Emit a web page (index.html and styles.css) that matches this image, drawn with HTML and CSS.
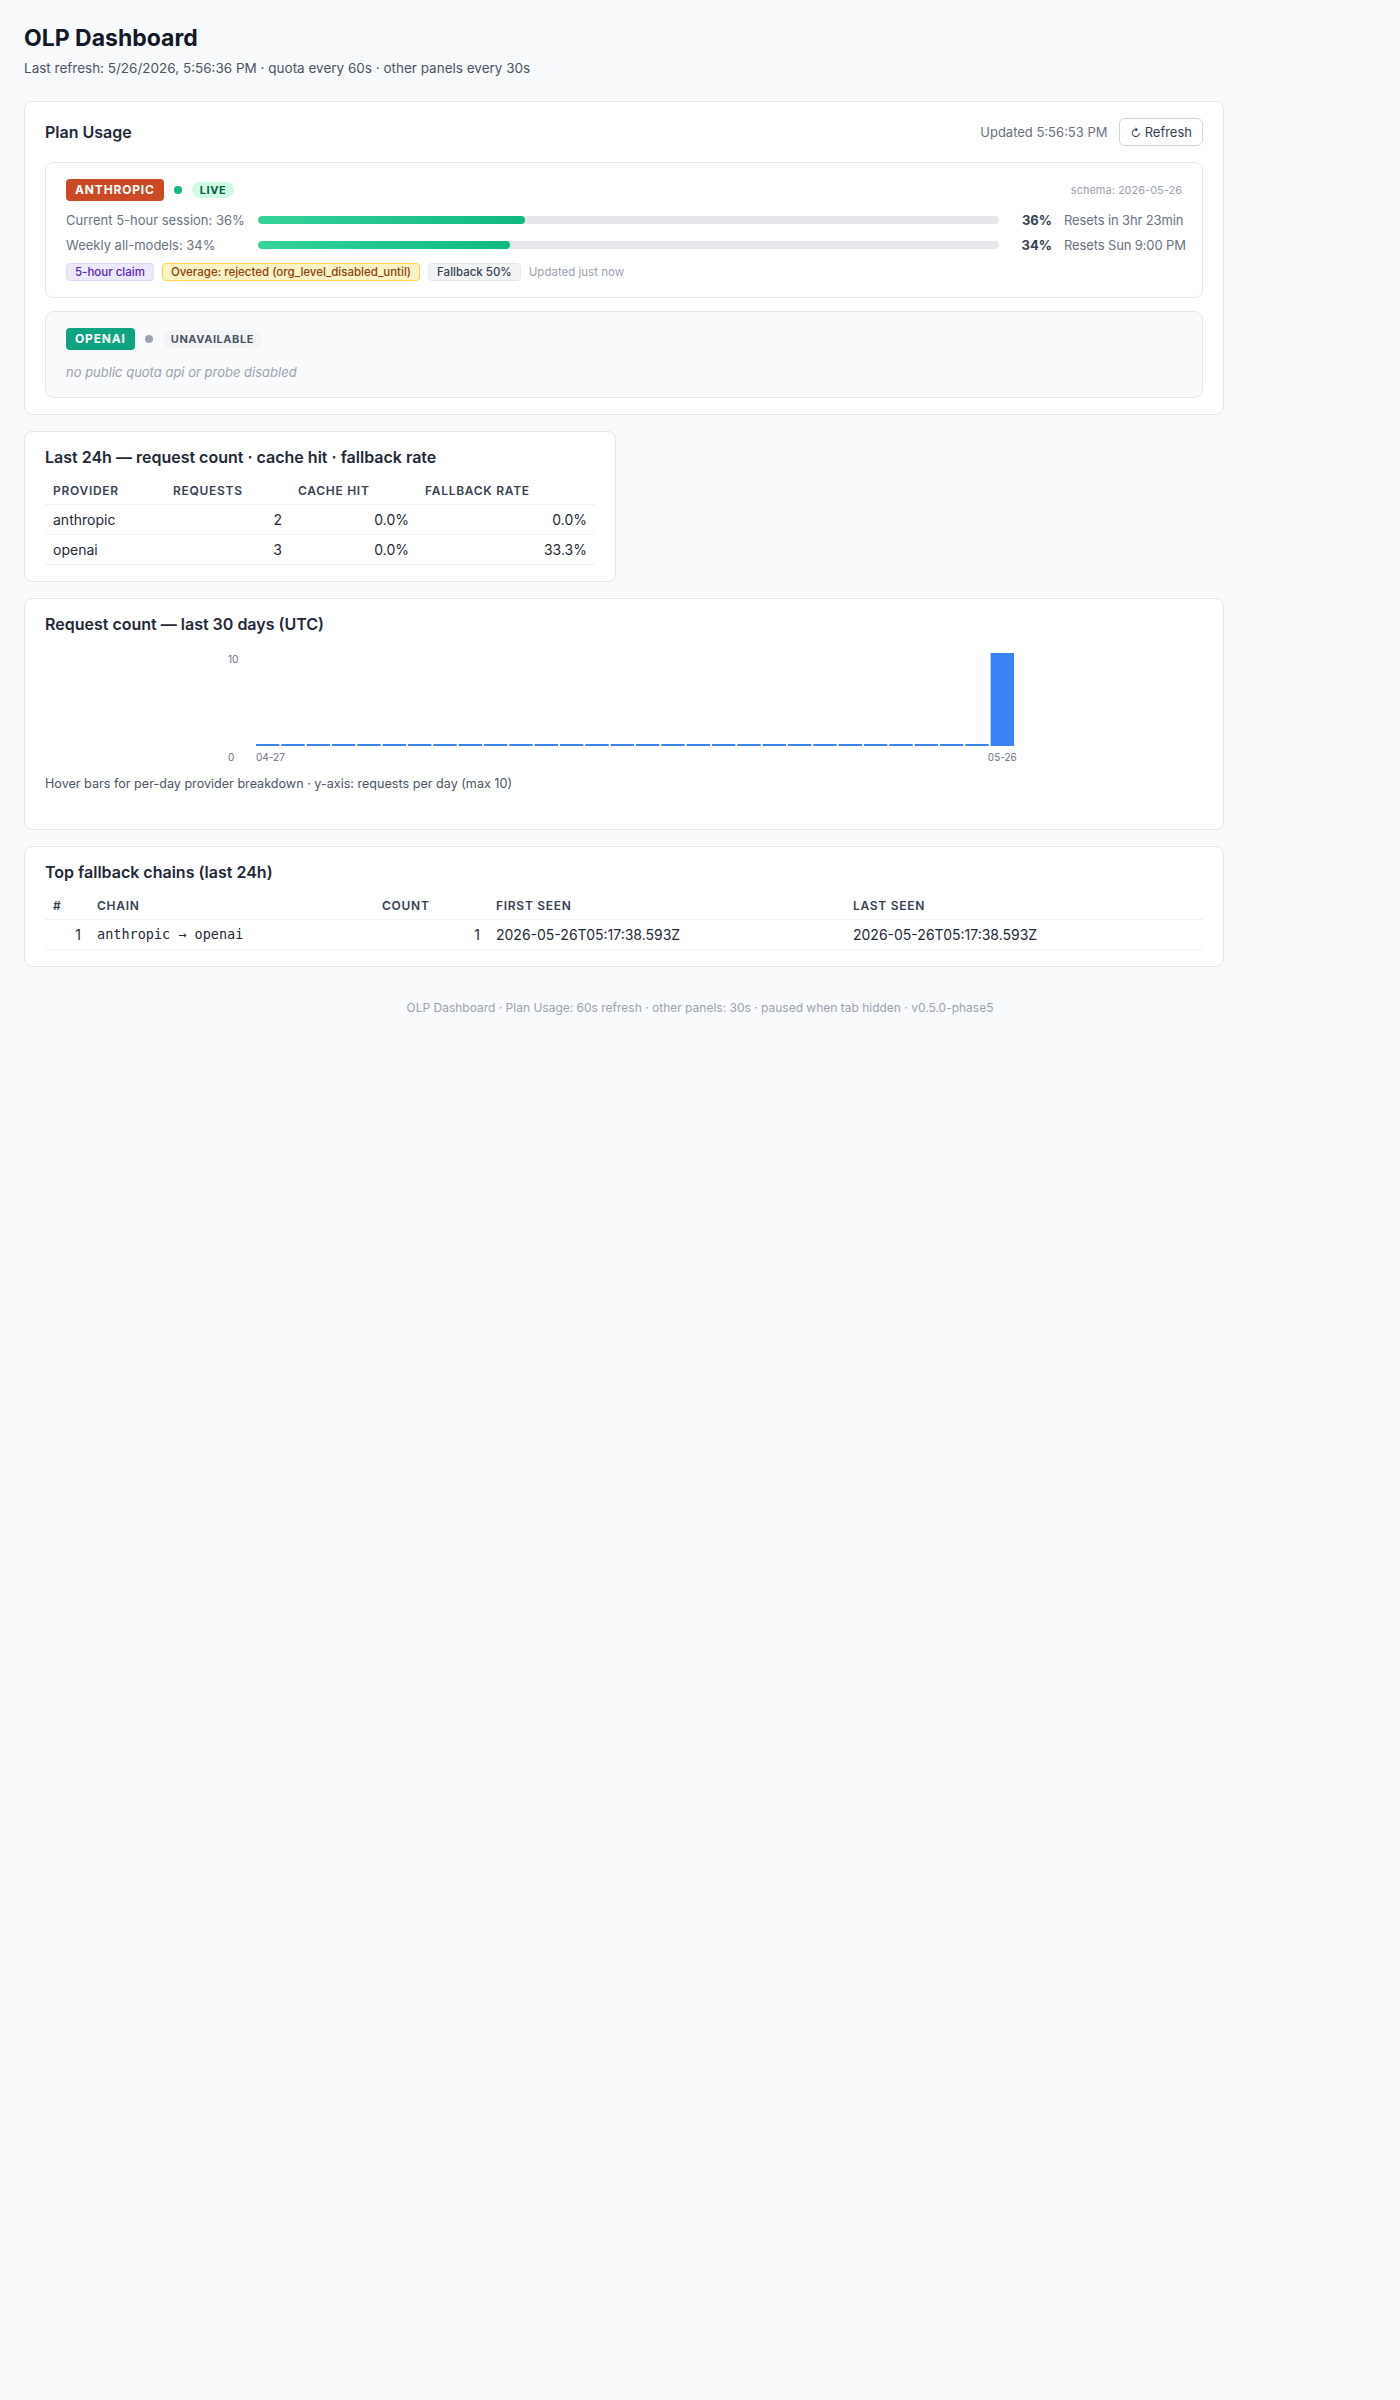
FILE: index.html
```html
<!DOCTYPE html>
<html>
<head>
    <title>OLP Dashboard</title>
    <link rel="stylesheet" href="styles.css">
</head>
<body>
    <header class="page-head">
        <h1>OLP Dashboard</h1>
        <p class="sub">Last refresh: 5/26/2026, 5:56:36 PM · quota every 60s · other panels every 30s</p>
    </header>

    <main class="grid">
        <section class="card wide">
            <div class="card-head">
                <h2>Plan Usage</h2>
                <div class="head-right">
                    <span class="muted">Updated 5:56:53 PM</span>
                    <button type="button" class="btn"><span class="btn-ico">↻</span> Refresh</button>
                </div>
            </div>

            <div class="provider">
                <div class="prov-head">
                    <span class="badge anthropic">ANTHROPIC</span>
                    <span class="dot green"></span>
                    <span class="pill live">LIVE</span>
                    <span class="schema">schema: 2026-05-26</span>
                </div>
                <div class="meters">
                    <div class="meter">
                        <span class="m-label">Current 5-hour session: 36%</span>
                        <div class="track"><div class="fill" style="width:36%"></div></div>
                        <span class="m-pct">36%</span>
                        <span class="m-reset">Resets in 3hr 23min</span>
                    </div>
                    <div class="meter">
                        <span class="m-label">Weekly all-models: 34%</span>
                        <div class="track"><div class="fill" style="width:34%"></div></div>
                        <span class="m-pct">34%</span>
                        <span class="m-reset">Resets Sun 9:00 PM</span>
                    </div>
                </div>
                <div class="tags">
                    <span class="tag purple">5-hour claim</span>
                    <span class="tag amber">Overage: rejected (org_level_disabled_until)</span>
                    <span class="tag gray">Fallback 50%</span>
                    <span class="tag-note">Updated just now</span>
                </div>
            </div>

            <div class="provider off">
                <div class="prov-head">
                    <span class="badge openai">OPENAI</span>
                    <span class="dot gray"></span>
                    <span class="pill unavail">UNAVAILABLE</span>
                </div>
                <p class="off-note">no public quota api or probe disabled</p>
            </div>
        </section>

        <section class="card">
            <h2>Last 24h — request count · cache hit · fallback rate</h2>
            <table class="tbl stats">
                <thead>
                    <tr>
                        <th class="c-prov">Provider</th>
                        <th class="c-req">Requests</th>
                        <th class="c-cache">Cache hit</th>
                        <th>Fallback rate</th>
                    </tr>
                </thead>
                <tbody>
                    <tr><td>anthropic</td><td class="num">2</td><td class="num">0.0%</td><td class="num">0.0%</td></tr>
                    <tr><td>openai</td><td class="num">3</td><td class="num">0.0%</td><td class="num">33.3%</td></tr>
                </tbody>
            </table>
        </section>

        <section class="card wide">
            <h2>Request count — last 30 days (UTC)</h2>
            <svg id="chart" class="chart" width="800" height="120" viewBox="0 0 800 120"></svg>
            <p class="chart-note">Hover bars for per-day provider breakdown · y-axis: requests per day (max 10)</p>
        </section>

        <section class="card wide">
            <h2>Top fallback chains (last 24h)</h2>
            <table class="tbl chains">
                <thead>
                    <tr>
                        <th class="c-rank">#</th>
                        <th class="c-chain">Chain</th>
                        <th class="c-count">Count</th>
                        <th class="c-seen">First seen</th>
                        <th>Last seen</th>
                    </tr>
                </thead>
                <tbody>
                    <tr>
                        <td class="num">1</td>
                        <td class="mono">anthropic → openai</td>
                        <td class="num">1</td>
                        <td>2026-05-26T05:17:38.593Z</td>
                        <td>2026-05-26T05:17:38.593Z</td>
                    </tr>
                </tbody>
            </table>
        </section>
    </main>

    <footer class="foot">OLP Dashboard · Plan Usage: 60s refresh · other panels: 30s · paused when tab hidden · v0.5.0-phase5</footer>

    <script>
        // 30 days, only today has traffic
        const counts = [];
        for (let i = 0; i < 30; i++) counts.push(0);
        counts[29] = 10;

        const svg = document.getElementById('chart');
        const ns = 'http://www.w3.org/2000/svg';
        const plotLeft = 32, plotTop = 7, plotBottom = 100, pitch = 760 / 30;
        const maxCount = 10;

        function label(x, y, text, anchor) {
            const t = document.createElementNS(ns, 'text');
            t.setAttribute('x', x);
            t.setAttribute('y', y);
            t.setAttribute('text-anchor', anchor);
            t.setAttribute('class', 'axis');
            t.textContent = text;
            svg.appendChild(t);
        }

        label(4, 17, '10', 'start');
        label(4, 115, '0', 'start');

        counts.forEach((c, i) => {
            let h = (c / maxCount) * (plotBottom - plotTop);
            if (h < 2) h = 2;
            const r = document.createElementNS(ns, 'rect');
            r.setAttribute('x', plotLeft + i * pitch);
            r.setAttribute('y', plotBottom - h);
            r.setAttribute('width', pitch - 2);
            r.setAttribute('height', h);
            r.setAttribute('class', 'bar');
            svg.appendChild(r);
        });

        label(plotLeft, 115, '04-27', 'start');
        label(plotLeft + 29 * pitch + (pitch - 2) / 2, 115, '05-26', 'middle');
    </script>
</body>
</html>
```

FILE: styles.css
```css
body {
    margin: 0;
    padding: 24px;
    background-color: #f9fafb;
    font-family: Inter, "Liberation Sans", sans-serif;
    color: #1f2937;
}
h1 {
    margin: 0;
    font-size: 23px;
    line-height: 29px;
    font-weight: 700;
    color: #111827;
}
h2 {
    margin: 0;
    font-size: 16px;
    line-height: 19px;
    font-weight: 600;
    color: #1f2937;
}
.sub {
    margin: 6px 0 0;
    font-size: 13.5px;
    line-height: 18px;
    color: #4b5563;
}
.page-head {
    margin-bottom: 24px;
}
.grid {
    max-width: 1200px;
    display: grid;
    grid-template-columns: 1fr 1fr;
    gap: 16px;
    align-items: start;
}
.card {
    background: #fff;
    border: 1px solid #e5e7eb;
    border-radius: 8px;
    padding: 16px 20px;
}
.card.wide {
    grid-column: span 2;
}
.card-head {
    display: flex;
    align-items: center;
    justify-content: space-between;
    margin-bottom: 16px;
}
.head-right {
    display: flex;
    align-items: center;
    gap: 12px;
}
.muted {
    font-size: 13px;
    color: #6b7280;
}
.btn {
    height: 28px;
    padding: 0 10px;
    background: #fff;
    border: 1px solid #d1d5db;
    border-radius: 6px;
    font-family: inherit;
    font-size: 13px;
    color: #374151;
    cursor: pointer;
}
.btn-ico {
    font-size: 11px;
}

/* provider boxes */
.provider {
    border: 1px solid #e5e7eb;
    border-radius: 8px;
    padding: 16px 20px;
}
.provider + .provider {
    margin-top: 13px;
}
.provider.off {
    background: #f9fafb;
}
.prov-head {
    display: flex;
    align-items: center;
    gap: 10px;
    height: 22px;
}
.badge {
    display: inline-block;
    height: 22px;
    line-height: 22px;
    padding: 0 9px;
    border-radius: 4px;
    color: #fff;
    font-size: 12px;
    font-weight: 700;
    letter-spacing: 0.07em;
}
.badge.anthropic {
    background: #cb4a26;
}
.badge.openai {
    background: #10a37f;
}
.dot {
    width: 8px;
    height: 8px;
    border-radius: 50%;
}
.dot.green {
    background: #10b981;
}
.dot.gray {
    background: #9ca3af;
}
.pill {
    height: 16px;
    line-height: 16px;
    padding: 0 8px;
    border-radius: 999px;
    font-size: 11px;
    font-weight: 700;
    letter-spacing: 0.05em;
}
.pill.live {
    background: #d1fae5;
    color: #065f46;
}
.pill.unavail {
    height: 18px;
    line-height: 18px;
    background: #f3f4f6;
    color: #4b5563;
}
.schema {
    margin-left: auto;
    font-size: 11px;
    color: #9ca3af;
}
.meters {
    margin-top: 10px;
    display: flex;
    flex-direction: column;
    gap: 7px;
}
.meter {
    display: grid;
    grid-template-columns: 180px 1fr 41px max-content;
    gap: 12px;
    align-items: center;
    font-size: 13px;
    line-height: 18px;
    white-space: nowrap;
}
.m-label {
    color: #6b7280;
}
.track {
    height: 8px;
    background: #e5e7eb;
    border-radius: 4px;
    overflow: hidden;
}
.fill {
    height: 100%;
    border-radius: 4px;
    background: linear-gradient(90deg, #34d399, #10b981);
}
.m-pct {
    text-align: right;
    font-weight: 700;
    color: #374151;
}
.m-reset {
    width: 118px;
    letter-spacing: -0.01em;
    color: #6b7280;
}
.tags {
    margin-top: 9px;
    display: flex;
    align-items: center;
    gap: 8px;
}
.tag {
    height: 16px;
    line-height: 16px;
    padding: 0 8px;
    border-radius: 4px;
    border: 1px solid;
    font-size: 11.5px;
    font-weight: 500;
}
.tag.purple {
    background: #ede9fe;
    border-color: #ddd6fe;
    color: #5b21b6;
}
.tag.amber {
    background: #fef3c7;
    border-color: #fcd34d;
    color: #92400e;
}
.tag.gray {
    background: #f3f4f6;
    border-color: #e5e7eb;
    color: #374151;
}
.tag-note {
    font-size: 11.5px;
    color: #9ca3af;
}
.off-note {
    margin: 13px 0 0;
    font-size: 13px;
    line-height: 18px;
    font-style: italic;
    color: #9ca3af;
}

/* tables */
.tbl {
    width: 100%;
    margin-top: 10px;
    border-collapse: collapse;
    table-layout: fixed;
}
.tbl th {
    padding: 6px 8px;
    text-align: left;
    font-size: 12px;
    line-height: 15px;
    font-weight: 600;
    letter-spacing: 0.06em;
    text-transform: uppercase;
    color: #374151;
    border-bottom: 1px solid #f0f1f3;
}
.tbl td {
    padding: 6px 8px;
    font-size: 14px;
    line-height: 17px;
    color: #1f2937;
    border-bottom: 1px solid #f0f1f3;
}
.tbl td.num {
    text-align: right;
}
.tbl td.mono {
    font-family: "DejaVu Sans Mono", "Liberation Mono", monospace;
    font-size: 13.5px;
}
.stats .c-prov { width: 104px; }
.stats .c-req { width: 109px; }
.stats .c-cache { width: 111px; }
.chains .c-rank { width: 28px; }
.chains .c-chain { width: 269px; }
.chains .c-count { width: 98px; }
.chains .c-seen { width: 341px; }

/* chart */
.chart {
    display: block;
    margin: 12px auto 0;
}
.chart .bar {
    fill: #3b82f6;
}
.chart .axis {
    font-family: Inter, "Liberation Sans", sans-serif;
    font-size: 10px;
    fill: #6b7280;
}
.chart-note {
    margin: 9px 0 20px;
    font-size: 12.6px;
    line-height: 18px;
    color: #4b5563;
}

.foot {
    margin-top: 32px;
    text-align: center;
    font-size: 12px;
    line-height: 18px;
    color: #9ca3af;
}
```
